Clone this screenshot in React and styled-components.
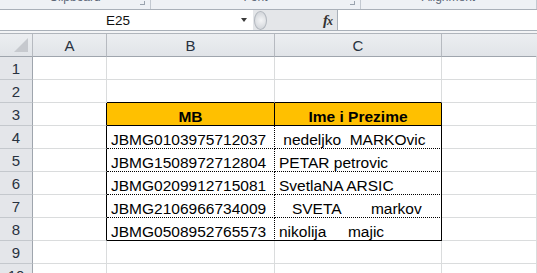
import React from 'react';
import styled, { createGlobalStyle } from 'styled-components';

const GlobalStyle = createGlobalStyle`
  html, body {
    margin: 0;
    padding: 0;
    background: #ffffff;
  }
  body {
    font-family: "Liberation Sans", Arial, sans-serif;
  }
`;

const gridLine = '#dadcdd';
const headLine = '#b6bac0';
const solid = '1px solid #000';
const dotted = '1px dotted #000';

const rows = [
  { n: 1 },
  { n: 2, edgeBottom: true },
  { n: 3, header: true },
  { n: 4, b: 'JBMG0103975712037', c: ' nedeljko  MARKOvic' },
  { n: 5, b: 'JBMG1508972712804', c: 'PETAR petrovic' },
  { n: 6, b: 'JBMG0209912715081', c: 'SvetlaNA ARSIC' },
  { n: 7, b: 'JBMG2106966734009', c: '   SVETA       markov' },
  { n: 8, b: 'JBMG0508952765573', c: 'nikolija     majic', last: true },
  { n: 9 },
  { n: 10 },
];

const App = () => {
  return (
    <Page>
      <GlobalStyle />
      <RibbonStrip>
        <RibbonGroup style={{ width: 150 }}>
          <RibbonLabel>Clipboard</RibbonLabel>
          <Launcher />
        </RibbonGroup>
        <RibbonGroup style={{ width: 209 }}>
          <RibbonLabel>Font</RibbonLabel>
          <Launcher />
        </RibbonGroup>
        <RibbonGroup style={{ flex: 1 }}>
          <RibbonLabel>Alignment</RibbonLabel>
        </RibbonGroup>
      </RibbonStrip>

      <FormulaBar>
        <NameBox>
          <NameText>E25</NameText>
          <DropArrow />
        </NameBox>
        <FxArea>
          <Splitter />
          <FxGlyph>
            f<span>x</span>
          </FxGlyph>
        </FxArea>
        <FormulaInput />
      </FormulaBar>
      <BarGap />

      <Sheet>
        <Corner>
          <CornerTriangle />
        </Corner>
        <ColHead>A</ColHead>
        <ColHead>B</ColHead>
        <ColHead>C</ColHead>
        <ColHead $last />

        {rows.map((r) => {
          const inTable = r.header || r.b;
          const aRight = inTable ? solid : `1px solid ${gridLine}`;
          let bBottom = `1px solid ${gridLine}`;
          let bRight = `1px solid ${gridLine}`;
          let cRight = `1px solid ${gridLine}`;
          if (r.edgeBottom) bBottom = solid;
          if (r.header) {
            bBottom = solid;
            bRight = solid;
            cRight = solid;
          }
          if (r.b) {
            bBottom = r.last ? solid : dotted;
            bRight = dotted;
            cRight = solid;
          }
          return (
            <React.Fragment key={r.n}>
              <RowHead>{r.n}</RowHead>
              <Cell $right={aRight} />
              <Cell
                $right={bRight}
                $bottom={bBottom}
                $fill={r.header ? '#ffc000' : null}
                $center={r.header}
                $bold={r.header}
              >
                {r.header ? 'MB' : r.b}
              </Cell>
              <Cell
                $right={cRight}
                $bottom={bBottom}
                $fill={r.header ? '#ffc000' : null}
                $center={r.header}
                $bold={r.header}
              >
                {r.header ? 'Ime i Prezime' : r.c}
              </Cell>
              <Cell />
            </React.Fragment>
          );
        })}
      </Sheet>
    </Page>
  );
};

const Page = styled.div`
  width: 537px;
  height: 273px;
  overflow: hidden;
  background: #ffffff;
`;

const RibbonStrip = styled.div`
  display: flex;
  height: 9px;
  background: #eef1f5;
  overflow: hidden;
`;

const RibbonGroup = styled.div`
  position: relative;
  display: flex;
  align-items: flex-end;
  justify-content: center;
  height: 9px;
  border-right: 1px solid #c3c9d1;
  overflow: hidden;
`;

const RibbonLabel = styled.div`
  font-family: "Liberation Sans", Arial, sans-serif;
  font-size: 12px;
  line-height: 12px;
  color: #5c6777;
  margin-bottom: 6px;
`;

const Launcher = styled.div`
  position: absolute;
  right: 5px;
  top: 1px;
  width: 4px;
  height: 3px;
  border-right: 1px solid #9aa3ae;
  border-bottom: 1px solid #9aa3ae;
`;

const FormulaBar = styled.div`
  display: flex;
  height: 20px;
  border-top: 1px solid #a9b0b9;
  border-bottom: 1px solid #a9b0b9;
  background: #e6e8eb;
`;

const NameBox = styled.div`
  position: relative;
  width: 253px;
  display: flex;
  align-items: center;
  justify-content: center;
  background: #ffffff;
`;

const NameText = styled.span`
  font-family: "Liberation Sans", Arial, sans-serif;
  font-size: 13.5px;
  color: #111;
  margin-left: -17px;
  margin-top: 1px;
`;

const DropArrow = styled.div`
  position: absolute;
  left: 241px;
  top: 8px;
  width: 0;
  height: 0;
  border-left: 3.5px solid transparent;
  border-right: 3.5px solid transparent;
  border-top: 4px solid #3a3a3a;
`;

const FxArea = styled.div`
  width: 84px;
  display: flex;
  align-items: center;
  justify-content: space-between;
  background: #e4e6e9;
  border-right: 1px solid #a9b0b9;
`;

const Splitter = styled.div`
  width: 13px;
  height: 19px;
  margin-left: 1px;
  border: 1px solid #b2b7be;
  border-radius: 50%;
  background: radial-gradient(circle at 55% 50%, #f4f5f7 0, #e4e6e9 4px, #d8dbdf 7px);
  box-sizing: border-box;
`;

const FxGlyph = styled.div`
  font-family: "Liberation Serif", "Times New Roman", serif;
  font-style: italic;
  font-weight: bold;
  font-size: 15px;
  color: #333;
  margin-right: 5px;
  letter-spacing: -1px;

  span {
    font-size: 12px;
  }
`;

const FormulaInput = styled.div`
  flex: 1;
  background: #ffffff;
`;

const BarGap = styled.div`
  height: 2px;
  background: #f3f4f6;
`;

const Sheet = styled.div`
  display: grid;
  grid-template-columns: 33px 74px 168px 167px 95px;
  grid-template-rows: 23px;
  grid-auto-rows: 23px;
  border-top: 1px solid #b0b5bc;
`;

const headBg = 'linear-gradient(#eceef1, #e1e4e8)';

const Corner = styled.div`
  position: relative;
  box-sizing: border-box;
  background: ${headBg};
  border-right: 1px solid ${headLine};
  border-bottom: 1px solid #9fa5ad;
`;

const CornerTriangle = styled.div`
  position: absolute;
  right: 4px;
  bottom: 4px;
  width: 0;
  height: 0;
  border-left: 14px solid transparent;
  border-bottom: 14px solid #c6c9ce;
`;

const ColHead = styled.div`
  box-sizing: border-box;
  display: flex;
  align-items: center;
  justify-content: center;
  background: ${headBg};
  border-right: 1px solid ${(p) => (p.$last ? 'transparent' : headLine)};
  border-bottom: 1px solid #9fa5ad;
  font-family: "Liberation Sans", Arial, sans-serif;
  font-size: 15px;
  color: #283240;
  padding-top: 1px;
`;

const RowHead = styled.div`
  box-sizing: border-box;
  display: flex;
  align-items: center;
  justify-content: center;
  background: #e4e6ea;
  border-right: 1px solid #9fa5ad;
  border-bottom: 1px solid #c4c8cd;
  font-family: "Liberation Sans", Arial, sans-serif;
  font-size: 15px;
  color: #283240;
  padding-top: 1px;
`;

const Cell = styled.div`
  box-sizing: border-box;
  display: flex;
  align-items: flex-end;
  justify-content: ${(p) => (p.$center ? 'center' : 'flex-start')};
  padding-left: ${(p) => (p.$center ? '0' : '4px')};
  background: ${(p) => p.$fill || '#ffffff'};
  border-right: ${(p) => p.$right || `1px solid ${gridLine}`};
  border-bottom: ${(p) => p.$bottom || `1px solid ${gridLine}`};
  font-family: "Liberation Sans", Arial, sans-serif;
  font-size: 15.5px;
  line-height: 17px;
  font-weight: ${(p) => (p.$bold ? 'bold' : 'normal')};
  color: #000;
  white-space: pre;
  overflow: hidden;
`;

export default App;
